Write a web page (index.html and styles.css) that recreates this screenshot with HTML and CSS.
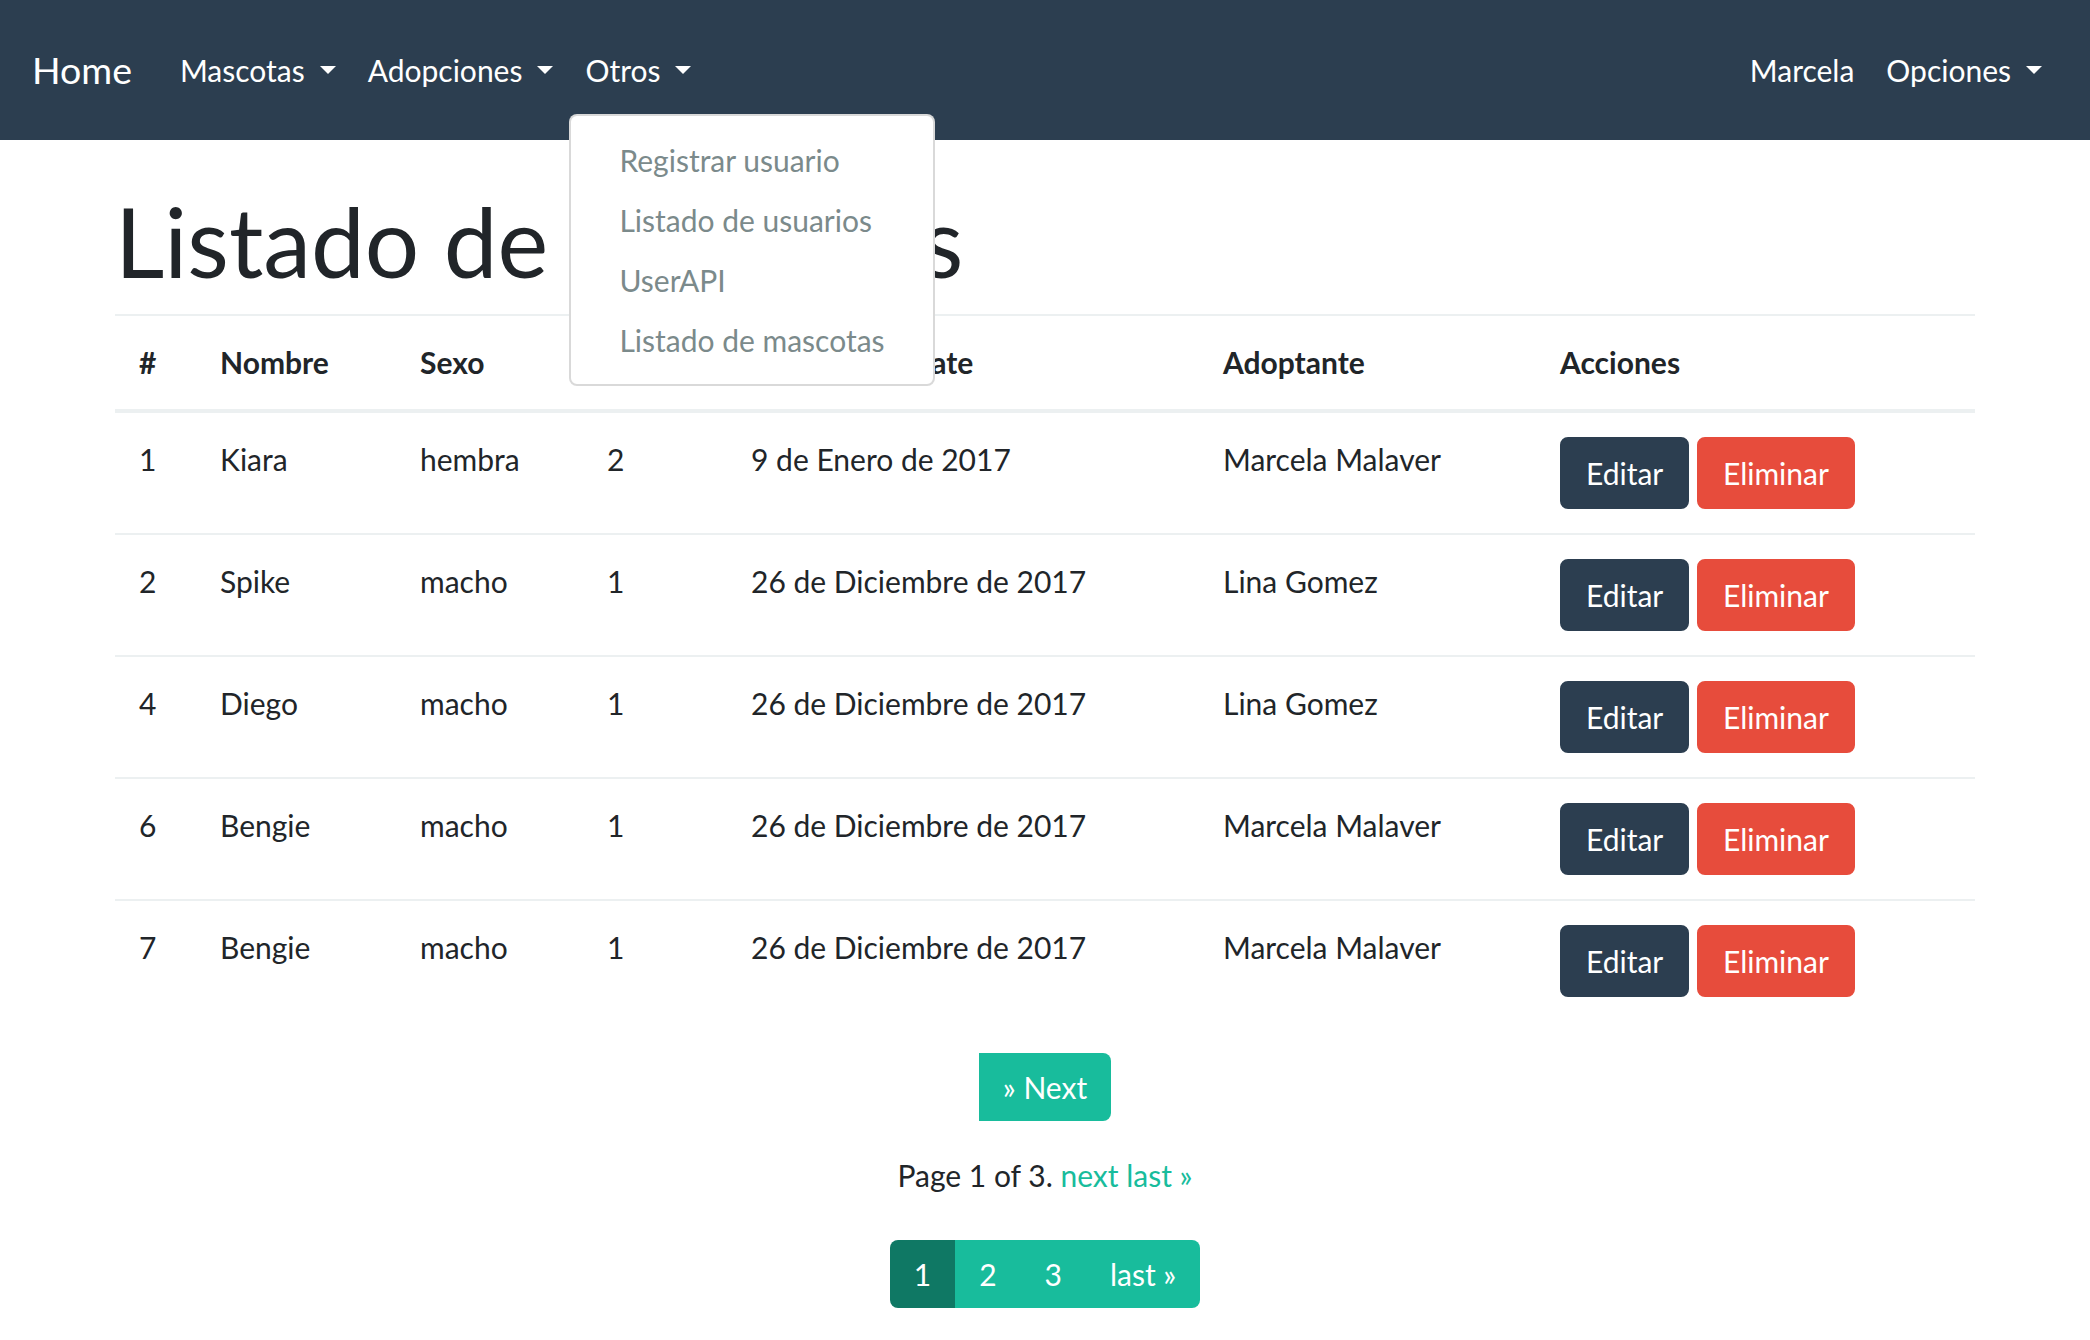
FILE: index.html
```html
<!DOCTYPE html>
<html lang="es">
<head>
<meta charset="utf-8">
<title>Listado de mascotas</title>
<link rel="stylesheet" href="styles.css">
</head>
<body>
<nav class="navbar">
  <a class="brand" href="#">Home</a>
  <ul class="nav">
    <li class="nav-item"><a class="nav-link dropdown-toggle" href="#">Mascotas</a></li>
    <li class="nav-item"><a class="nav-link dropdown-toggle" href="#">Adopciones</a></li>
    <li class="nav-item"><a class="nav-link dropdown-toggle" href="#">Otros</a>
      <div class="dropdown-menu">
        <a class="dropdown-item" href="#">Registrar usuario</a>
        <a class="dropdown-item" href="#">Listado de usuarios</a>
        <a class="dropdown-item" href="#">UserAPI</a>
        <a class="dropdown-item" href="#">Listado de mascotas</a>
      </div>
    </li>
  </ul>
  <ul class="nav nav-right">
    <li class="nav-item"><a class="nav-link" href="#">Marcela</a></li>
    <li class="nav-item"><a class="nav-link dropdown-toggle" href="#">Opciones</a></li>
  </ul>
</nav>
<main class="container">
  <h1 class="title">Listado de mascotas</h1>
  <table class="table">
    <colgroup>
      <col class="c-id"><col class="c-name"><col class="c-sex"><col class="c-age"><col class="c-date"><col class="c-owner"><col class="c-act">
    </colgroup>
    <thead>
      <tr><th>#</th><th>Nombre</th><th>Sexo</th><th>Edad</th><th>Fecha de rescate</th><th>Adoptante</th><th>Acciones</th></tr>
    </thead>
    <tbody>
      <tr><td>1</td><td>Kiara</td><td>hembra</td><td>2</td><td>9 de Enero de 2017</td><td>Marcela Malaver</td><td><a class="btn btn-primary" href="#">Editar</a> <a class="btn btn-danger" href="#">Eliminar</a></td></tr>
      <tr><td>2</td><td>Spike</td><td>macho</td><td>1</td><td>26 de Diciembre de 2017</td><td>Lina Gomez</td><td><a class="btn btn-primary" href="#">Editar</a> <a class="btn btn-danger" href="#">Eliminar</a></td></tr>
      <tr><td>4</td><td>Diego</td><td>macho</td><td>1</td><td>26 de Diciembre de 2017</td><td>Lina Gomez</td><td><a class="btn btn-primary" href="#">Editar</a> <a class="btn btn-danger" href="#">Eliminar</a></td></tr>
      <tr><td>6</td><td>Bengie</td><td>macho</td><td>1</td><td>26 de Diciembre de 2017</td><td>Marcela Malaver</td><td><a class="btn btn-primary" href="#">Editar</a> <a class="btn btn-danger" href="#">Eliminar</a></td></tr>
      <tr><td>7</td><td>Bengie</td><td>macho</td><td>1</td><td>26 de Diciembre de 2017</td><td>Marcela Malaver</td><td><a class="btn btn-primary" href="#">Editar</a> <a class="btn btn-danger" href="#">Eliminar</a></td></tr>
    </tbody>
  </table>
  <div class="pager">
    <ul class="pagination pagination-next">
      <li class="page-item"><a class="page-link" href="#">&raquo; Next</a></li>
    </ul>
    <p class="step-links">Page 1 of 3. <a href="#">next</a> <a href="#">last &raquo;</a></p>
    <ul class="pagination">
      <li class="page-item active"><a class="page-link" href="#">1</a></li>
      <li class="page-item"><a class="page-link" href="#">2</a></li>
      <li class="page-item"><a class="page-link" href="#">3</a></li>
      <li class="page-item"><a class="page-link" href="#">last &raquo;</a></li>
    </ul>
  </div>
</main>
</body>
</html>
```

FILE: styles.css
```css
* { box-sizing: border-box; }

html, body {
  margin: 0;
  padding: 0;
  background: #fff;
}

body {
  font-family: Lato, "Noto Sans", "Liberation Sans", sans-serif;
  font-size: 30px;
  line-height: 1.5;
  color: #212529;
}

a { text-decoration: none; }

/* Navbar */
.navbar {
  display: flex;
  align-items: center;
  height: 140px;
  padding: 32px 32px;
  background: #2c3e50;
}

.brand {
  color: #fff;
  font-size: 37.5px;
  line-height: 1.5;
  padding: 10px 0;
  margin-right: 32px;
}

.nav {
  display: flex;
  list-style: none;
  margin: 0;
  padding: 0;
}

.nav-right { margin-left: auto; }

.nav-item { position: relative; }

.nav-link {
  display: block;
  color: #fff;
  padding: 8px 16px;
}

.dropdown-toggle::after {
  content: "";
  display: inline-block;
  margin-left: 15px;
  vertical-align: 0.255em;
  border-top: 8px solid;
  border-right: 8px solid transparent;
  border-left: 8px solid transparent;
}

.dropdown-menu {
  position: absolute;
  top: 74.5px;
  left: 0;
  z-index: 10;
  padding: 14px 0;
  background: #fff;
  border: 2px solid rgba(0, 0, 0, 0.15);
  border-radius: 8px;
  white-space: nowrap;
}

.dropdown-item {
  display: block;
  padding: 8px 48px;
  line-height: 44px;
  color: #7b8a8b;
}

/* Content */
.container {
  max-width: 1920px;
  margin: 0 auto;
  padding: 0 30px;
}

.title {
  margin: 43px 0 16px;
  font-size: 96px;
  font-weight: 400;
  line-height: 1.2;
}

.table {
  width: 100%;
  table-layout: fixed;
  border-collapse: collapse;
  margin-bottom: 32px;
}

.c-id { width: 81px; }
.c-name { width: 200px; }
.c-sex { width: 187px; }
.c-age { width: 144px; }
.c-date { width: 472px; }
.c-owner { width: 337px; }

.table th,
.table td {
  padding: 24px;
  text-align: left;
  vertical-align: top;
  border-top: 2px solid #ecf0f1;
  white-space: nowrap;
}

.table thead th {
  font-weight: 700;
  border-bottom: 4px solid #ecf0f1;
}

.btn {
  display: inline-block;
  padding: 12px 24px;
  border: 2px solid transparent;
  border-radius: 8px;
  color: #fff;
  line-height: 44px;
}

.btn-primary { background: #2c3e50; border-color: #2c3e50; }
.btn-danger { background: #e74c3c; border-color: #e74c3c; }

/* Pagination */
.pager {
  display: flex;
  flex-direction: column;
  align-items: center;
}

.pagination {
  display: flex;
  list-style: none;
  margin: 0 0 32px;
  padding: 0;
}

.page-link {
  display: block;
  padding: 16px 24px;
  line-height: 36px;
  color: #fff;
  background: #18bc9c;
}

.page-item:first-child .page-link {
  border-top-left-radius: 8px;
  border-bottom-left-radius: 8px;
}

.page-item:last-child .page-link {
  border-top-right-radius: 8px;
  border-bottom-right-radius: 8px;
}

.page-item.active .page-link { background: #0f7864; }

.pagination-next .page-item:first-child .page-link {
  border-radius: 0 8px 8px 0;
}

.step-links {
  margin: 0 0 42px;
}

.step-links a { color: #18bc9c; }
```
